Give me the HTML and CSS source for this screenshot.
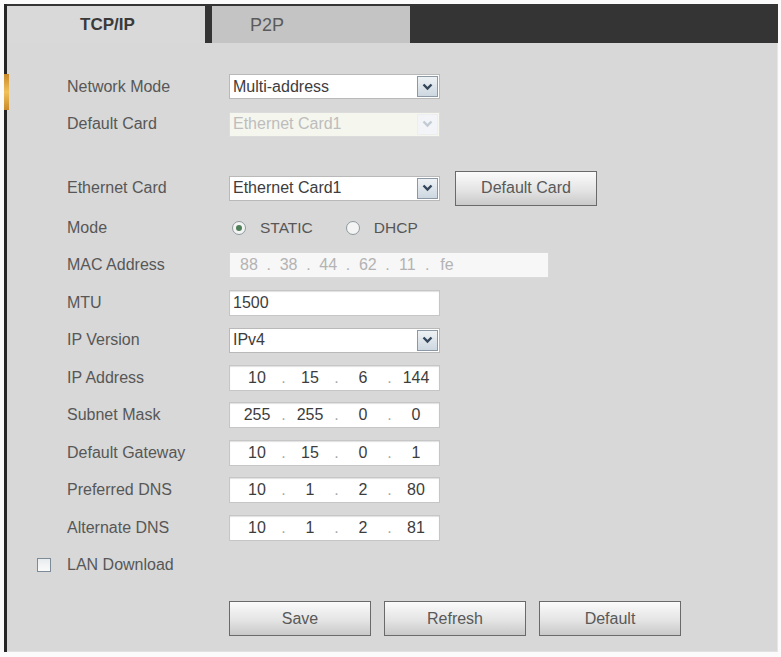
FILE: index.html
```html
<!DOCTYPE html>
<html lang="en">
<head>
  <meta charset="UTF-8">
  <title>Network - TCP/IP</title>
  <link rel="stylesheet" href="styles.css">
</head>
<body>
  <div class="frame">
    <span class="side-mark"></span>
    <div class="tabs">
      <div class="tab active">TCP/IP</div>
      <div class="tab">P2P</div>
    </div>

    <div class="panel">
      <div class="row">
        <span class="label">Network Mode</span>
        <div class="select">
          <span class="select-text">Multi-address</span>
          <span class="arrow"><svg width="11" height="8" viewBox="0 0 11 8"><polyline points="1.5,1.5 5.5,5.5 9.5,1.5" fill="none" stroke="#34465a" stroke-width="2.4"/></svg></span>
        </div>
      </div>
      <div class="row">
        <span class="label">Default Card</span>
        <div class="select disabled">
          <span class="select-text">Ethernet Card1</span>
          <span class="arrow"><svg width="11" height="8" viewBox="0 0 11 8"><polyline points="1.5,1.5 5.5,5.5 9.5,1.5" fill="none" stroke="#c2cad4" stroke-width="2.4"/></svg></span>
        </div>
      </div>

      <div class="row tall">
        <span class="label">Ethernet Card</span>
        <div class="select">
          <span class="select-text">Ethernet Card1</span>
          <span class="arrow"><svg width="11" height="8" viewBox="0 0 11 8"><polyline points="1.5,1.5 5.5,5.5 9.5,1.5" fill="none" stroke="#34465a" stroke-width="2.4"/></svg></span>
        </div>
        <button class="btn card-btn">Default Card</button>
      </div>
      <div class="row">
        <span class="label">Mode</span>
        <span class="radio checked"></span>
        <span class="radio-text">STATIC</span>
        <span class="radio second"></span>
        <span class="radio-text">DHCP</span>
      </div>
      <div class="row">
        <span class="label">MAC Address</span>
        <div class="field mac">
          <span class="oct">88</span><span class="dot">.</span>
          <span class="oct">38</span><span class="dot">.</span>
          <span class="oct">44</span><span class="dot">.</span>
          <span class="oct">62</span><span class="dot">.</span>
          <span class="oct">11</span><span class="dot">.</span>
          <span class="oct">fe</span>
        </div>
      </div>
      <div class="row">
        <span class="label">MTU</span>
        <div class="field text">1500</div>
      </div>
      <div class="row">
        <span class="label">IP Version</span>
        <div class="select">
          <span class="select-text">IPv4</span>
          <span class="arrow"><svg width="11" height="8" viewBox="0 0 11 8"><polyline points="1.5,1.5 5.5,5.5 9.5,1.5" fill="none" stroke="#34465a" stroke-width="2.4"/></svg></span>
        </div>
      </div>
      <div class="row">
        <span class="label">IP Address</span>
        <div class="field ip">
          <span class="oct">10</span><span class="dot">.</span><span class="oct">15</span><span class="dot">.</span><span class="oct">6</span><span class="dot">.</span><span class="oct">144</span>
        </div>
      </div>
      <div class="row">
        <span class="label">Subnet Mask</span>
        <div class="field ip">
          <span class="oct">255</span><span class="dot">.</span><span class="oct">255</span><span class="dot">.</span><span class="oct">0</span><span class="dot">.</span><span class="oct">0</span>
        </div>
      </div>
      <div class="row">
        <span class="label">Default Gateway</span>
        <div class="field ip">
          <span class="oct">10</span><span class="dot">.</span><span class="oct">15</span><span class="dot">.</span><span class="oct">0</span><span class="dot">.</span><span class="oct">1</span>
        </div>
      </div>
      <div class="row">
        <span class="label">Preferred DNS</span>
        <div class="field ip">
          <span class="oct">10</span><span class="dot">.</span><span class="oct">1</span><span class="dot">.</span><span class="oct">2</span><span class="dot">.</span><span class="oct">80</span>
        </div>
      </div>
      <div class="row">
        <span class="label">Alternate DNS</span>
        <div class="field ip">
          <span class="oct">10</span><span class="dot">.</span><span class="oct">1</span><span class="dot">.</span><span class="oct">2</span><span class="dot">.</span><span class="oct">81</span>
        </div>
      </div>
      <div class="row check-row">
        <span class="checkbox"></span>
        <span class="label">LAN Download</span>
      </div>

      <div class="actions">
        <button class="btn">Save</button>
        <button class="btn">Refresh</button>
        <button class="btn">Default</button>
      </div>
    </div>
  </div>
</body>
</html>
```

FILE: styles.css
```css
body {
  margin: 0;
  background: #fbfbfb;
  font-family: "Liberation Sans", Arial, sans-serif;
}
.frame {
  position: relative;
  margin: 4px 3px 0 4px;
  width: 774px;
  height: 648px;
  border-left: 3px solid #262626;
  box-sizing: border-box;
  background: #d8d8d8;
}
.side-mark {
  position: absolute;
  left: -3px;
  top: 70px;
  width: 5px;
  height: 36px;
  background: linear-gradient(#c98a2a, #f1c15a 50%, #c98a2a);
}
.tabs {
  display: flex;
  height: 39px;
  background: #343434;
  padding-top: 2px;
  box-sizing: border-box;
}
.tab {
  width: 198px;
  background: #c4c4c4;
  color: #5a5a5a;
  font-size: 18px;
  padding-left: 38px;
  line-height: 38px;
  box-sizing: border-box;
}
.tab.active {
  background: #d9d9d9;
  color: #3a3a3a;
  font-weight: bold;
  font-size: 17px;
  padding-left: 73px;
  margin-right: 7px;
}
.panel {
  padding: 25px 0 0 60px;
  border-right: 1px solid #e6e6e6;
  height: 609px;
  box-sizing: border-box;
  border-bottom: 1px solid #e2e2e2;
}
.row {
  display: flex;
  align-items: center;
  height: 37.5px;
}
.row.tall {
  height: 42px;
  margin-top: 24px;
}
.label {
  width: 162px;
  font-size: 16px;
  color: #575757;
}
.select {
  display: flex;
  align-items: center;
  width: 211px;
  height: 25px;
  background: #fff;
  border: 1px solid #b9b9b9;
  box-sizing: border-box;
}
.select-text {
  flex: 1;
  padding-left: 3px;
  font-size: 16px;
  color: #3d3d3d;
}
.arrow {
  display: flex;
  align-items: center;
  justify-content: center;
  width: 21px;
  height: 21px;
  margin-right: 1px;
  border: 1px solid #8c98a4;
  box-sizing: border-box;
  background: linear-gradient(#eef2f5, #cdd7e0);
}
.select.disabled {
  background: #f5f6ee;
  border-color: #dcdcdc;
}
.select.disabled .select-text {
  color: #bdbdbd;
}
.select.disabled .arrow {
  border-color: #eceef0;
  background: #f3f4f7;
}
.btn {
  width: 142px;
  height: 35px;
  border: 1px solid #6a6a6a;
  background: linear-gradient(#fbfbfb, #e4e4e4 55%, #c9c9c9);
  font-family: "Liberation Sans", Arial, sans-serif;
  font-size: 16px;
  color: #595959;
  padding: 0;
}
.card-btn {
  margin-left: 15px;
}
.radio {
  width: 14px;
  height: 14px;
  border-radius: 50%;
  border: 1px solid #8d9a9d;
  background: #f4f4f4;
  box-sizing: border-box;
  margin-left: 3px;
  position: relative;
}
.radio.checked::after {
  content: "";
  position: absolute;
  left: 3px;
  top: 3px;
  width: 6px;
  height: 6px;
  border-radius: 50%;
  background: #4f7f58;
}
.radio.second {
  margin-left: 33px;
}
.radio-text {
  margin-left: 14px;
  font-size: 15.5px;
  color: #575757;
}
.field {
  display: flex;
  align-items: center;
  height: 26px;
  background: #fff;
  border: 1px solid #c6c6c6;
  box-shadow: inset 0 1px 1px #e0e0e0;
  box-sizing: border-box;
  font-size: 16px;
  color: #3d3d3d;
}
.field.text {
  width: 211px;
  padding-left: 3px;
}
.field.ip {
  width: 211px;
  padding-left: 7px;
}
.field.ip .oct {
  width: 40px;
  text-align: center;
}
.field.ip .dot {
  width: 13px;
  text-align: center;
  color: #a8a8a8;
}
.field.mac {
  width: 320px;
  padding-left: 5px;
  background: #f7f7f7;
  border-color: #dadada;
  box-shadow: none;
  color: #b3b3b3;
}
.field.mac .oct {
  width: 28px;
  text-align: center;
}
.field.mac .dot {
  width: 11.6px;
  text-align: center;
}
.check-row {
  margin-left: -30px;
}
.checkbox {
  width: 14px;
  height: 14px;
  border: 1px solid #7d8a98;
  background: linear-gradient(#e8ecef, #fafafa);
  box-sizing: border-box;
  margin-right: 16px;
}
.actions {
  display: flex;
  gap: 13px;
  margin: 17px 0 0 162px;
}
```
